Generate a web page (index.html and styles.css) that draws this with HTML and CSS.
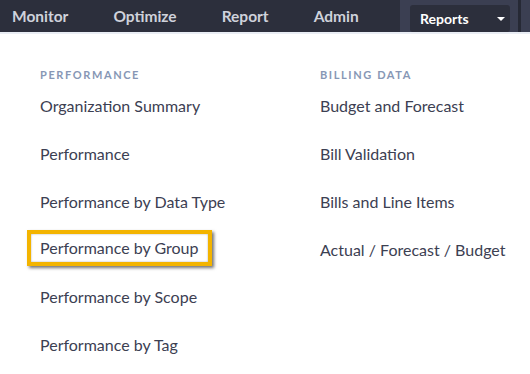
FILE: index.html
```html
<!DOCTYPE html>
<html lang="en">
<head>
    <meta charset="UTF-8">
    <meta name="viewport" content="width=device-width, initial-scale=1.0">
    <title>Reports Menu</title>
    <link rel="stylesheet" href="styles.css">
</head>
<body>
    <nav class="topbar">
        <a class="nav-item nav-first">Monitor</a>
        <a class="nav-item">Optimize</a>
        <a class="nav-item">Report</a>
        <a class="nav-item">Admin</a>
        <div class="reports-slot">
            <div class="reports-btn">
                <span>Reports</span>
                <span class="caret"></span>
            </div>
        </div>
        <div class="divider"></div>
        <div class="tail"></div>
    </nav>

    <div class="menu">
        <div class="menu-col">
            <div class="menu-head">PERFORMANCE</div>
            <a class="menu-link">Organization Summary</a>
            <a class="menu-link">Performance</a>
            <a class="menu-link">Performance by Data Type</a>
            <a class="menu-link highlighted">Performance by Group</a>
            <a class="menu-link">Performance by Scope</a>
            <a class="menu-link">Performance by Tag</a>
        </div>
        <div class="menu-col">
            <div class="menu-head">BILLING DATA</div>
            <a class="menu-link">Budget and Forecast</a>
            <a class="menu-link">Bill Validation</a>
            <a class="menu-link">Bills and Line Items</a>
            <a class="menu-link">Actual / Forecast / Budget</a>
        </div>
    </div>
</body>
</html>
```

FILE: styles.css
```css
body {
    margin: 0;
    font-family: Lato, "Open Sans", sans-serif;
    background-color: #fff;
    overflow: hidden;
}

.topbar {
    display: flex;
    align-items: center;
    height: 32px;
    background-color: #2c2f3c;
    border-bottom: 2px solid #e9edf4;
}

.nav-item {
    color: #cfd2db;
    font-size: 15.5px;
    font-weight: 700;
    margin-left: 45px;
}

.nav-first {
    margin-left: 12px;
}

.reports-slot {
    margin-left: auto;
    width: 118px;
    height: 32px;
    background-color: #3b3f52;
    display: flex;
    align-items: flex-end;
    padding-left: 10px;
    box-sizing: border-box;
}

.reports-btn {
    display: flex;
    align-items: center;
    justify-content: space-between;
    width: 100px;
    height: 27px;
    background-color: #2c2f3c;
    border-radius: 3px;
    padding: 0 5px 0 10px;
    box-sizing: border-box;
    color: #fff;
    font-size: 14px;
    font-weight: 700;
}

.caret {
    width: 0;
    height: 0;
    border-left: 4px solid transparent;
    border-right: 4px solid transparent;
    border-top: 4px solid #fff;
}

.divider {
    width: 3px;
    height: 32px;
    background-color: #262935;
}

.tail {
    width: 9px;
    height: 32px;
    background-color: #3b3f52;
}

.menu {
    display: grid;
    grid-template-columns: 280px 1fr;
    padding: 34px 0 0 40px;
}

.menu-col {
    display: flex;
    flex-direction: column;
    align-items: flex-start;
}

.menu-head {
    color: #8797b5;
    font-size: 11px;
    font-weight: 700;
    letter-spacing: 1.6px;
    line-height: 13px;
    margin-bottom: 15px;
}

.menu-link {
    color: #3c4052;
    font-size: 16px;
    line-height: 20px;
    margin-bottom: 28px;
}

.highlighted {
    margin-left: -13px;
    padding: 4px 9px;
    margin-top: -10px;
    margin-bottom: 21px;
    border: 4px solid #f3b400;
    box-shadow: 2px 2px 3px rgba(0, 0, 0, 0.55), inset 0 0 2px rgba(0, 0, 0, 0.35);
}
```
